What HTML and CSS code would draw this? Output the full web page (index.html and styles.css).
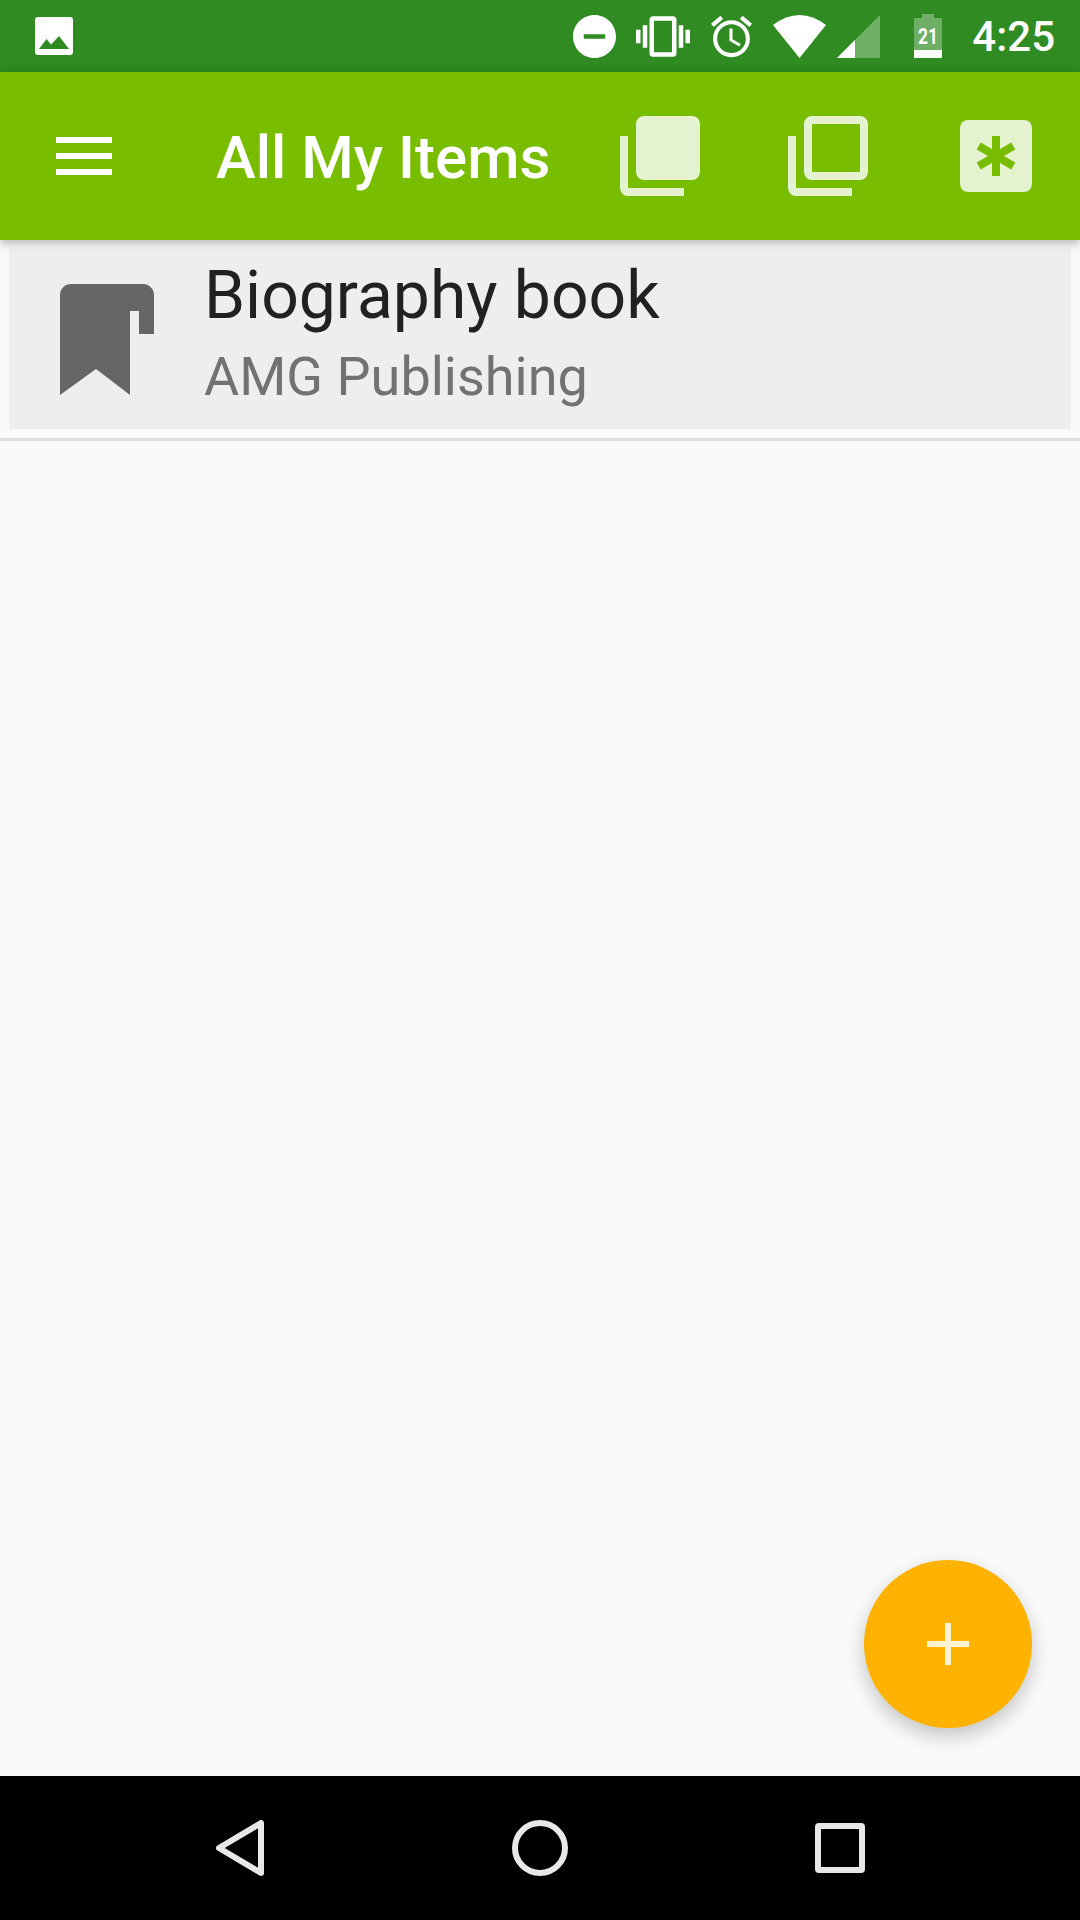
FILE: index.html
```html
<!DOCTYPE html>
<html lang="en">
<head>
  <meta charset="UTF-8" />
  <title>All My Items</title>
  <link rel="stylesheet" href="styles.css">
</head>
<body>
  <div class="status-bar">
    <svg class="notif-icon" width="38" height="38" viewBox="0 0 38 38">
      <path fill-rule="evenodd" fill="#fff" d="M3 0h32a3 3 0 0 1 3 3v32a3 3 0 0 1-3 3H3a3 3 0 0 1-3-3V3a3 3 0 0 1 3-3zM4 32h30L24 19l-8 8.500-4.500-5.500z"/>
    </svg>
    <div class="status-icons">
      <svg class="dnd" width="43" height="43" viewBox="2 2 20 20"><path fill="#fff" d="M12 2C6.480 2 2 6.480 2 12s4.480 10 10 10 10-4.480 10-10S17.520 2 12 2zm5 11H7v-2h10v2z"/></svg>
      <svg width="54" height="41" viewBox="0 3 24 18"><path fill="#fff" d="M0 15h2V9H0v6zm3 2h2V7H3v10zm19-8v6h2V9h-2zm-3 8h2V7h-2v10zM16.500 3h-9C6.670 3 6 3.670 6 4.500v15c0 .830.670 1.500 1.500 1.500h9c.830 0 1.500-.670 1.500-1.500v-15c0-.830-.670-1.500-1.500-1.500zM16 19H8V5h8v14z"/></svg>
      <svg width="41" height="43" viewBox="2 1.860 20 20.140"><path fill="#fff" d="M22 5.720l-4.600-3.860-1.290 1.530 4.600 3.860L22 5.720zM7.880 3.390L6.600 1.860 2 5.710l1.290 1.530 4.590-3.850zM12.500 8H11v6l4.750 2.850.750-1.230-4-2.370V8zM12 4c-4.970 0-9 4.030-9 9s4.030 9 9 9 9-4.030 9-9-4.030-9-9-9zm0 16c-3.870 0-7-3.130-7-7s3.130-7 7-7 7 3.130 7 7-3.130 7-7 7z"/></svg>
      <svg width="53" height="43" viewBox="0 0 53 43"><path fill="#fff" d="M0 10Q26.500-10 53 10L26.500 43z"/></svg>
      <svg class="signal" width="43" height="43" viewBox="0 0 43 43">
        <path fill="#fff" opacity=".3" d="M0 43L43 0v43z"/>
        <path fill="#fff" d="M0 43l18-18v18z"/>
      </svg>
      <svg class="battery" width="28" height="44" viewBox="0 0 28 44">
        <path fill="#fff" opacity=".3" d="M8 0h12v4h8v32H0V4h8z"/>
        <path fill="#fff" d="M0 36h28v8H0z"/>
        <text class="battery-level" x="14" y="30" text-anchor="middle" textLength="20" lengthAdjust="spacingAndGlyphs">21</text>
      </svg>
      <span class="clock">4:25</span>
    </div>
  </div>

  <header class="app-bar">
    <div class="menu-btn"><span></span><span></span><span></span></div>
    <h1 class="title">All My Items</h1>
    <svg class="action first" width="80" height="80" viewBox="0 0 80 80">
      <path fill="#e4f2d0" d="M0 20h8v52h56v8H8a8 8 0 0 1-8-8z"/>
      <rect x="16" width="64" height="64" rx="8" fill="#e4f2d0"/>
    </svg>
    <svg class="action second" width="80" height="80" viewBox="0 0 80 80">
      <path fill="#e4f2d0" d="M0 20h8v52h56v8H8a8 8 0 0 1-8-8z"/>
      <rect x="20" y="4" width="56" height="56" rx="4" fill="none" stroke="#e4f2d0" stroke-width="8"/>
    </svg>
    <svg class="action third" width="72" height="72" viewBox="0 0 72 72">
      <rect width="72" height="72" rx="8" fill="#e4f2d0"/>
      <path stroke="#79bd00" stroke-width="8" d="M36 16v40M18.700 26l34.600 20M18.700 46l34.600-20"/>
    </svg>
  </header>

  <main class="list">
    <div class="item">
      <svg class="item-icon" width="94" height="111" viewBox="0 0 94 111">
        <path fill="#666" d="M11 0h72a11 11 0 0 1 11 11v39H79V27H70v84L36 85 0 111V11A11 11 0 0 1 11 0z"/>
      </svg>
      <div class="item-text">
        <div class="item-title">Biography book</div>
        <div class="item-sub">AMG Publishing</div>
      </div>
    </div>
    <div class="divider"></div>
    <button class="fab"><span class="fab-plus"></span></button>
  </main>

  <footer class="nav-bar">
    <svg width="48" height="56" viewBox="0 0 48 56"><path fill="none" stroke="#e8e8e8" stroke-width="6" stroke-linejoin="round" d="M45 3v50L3 28z"/></svg>
    <svg width="56" height="56" viewBox="0 0 56 56"><circle cx="28" cy="28" r="25" fill="none" stroke="#e8e8e8" stroke-width="6"/></svg>
    <svg class="nav-recents" width="50" height="50" viewBox="0 0 50 50"><rect x="3" y="3" width="44" height="44" rx="1" fill="none" stroke="#e8e8e8" stroke-width="6"/></svg>
  </footer>
</body>
</html>
```

FILE: styles.css
```css
html, body {
  margin: 0;
  height: 100%;
}

body {
  display: flex;
  flex-direction: column;
  width: 1080px;
  height: 1920px;
  font-family: Roboto, sans-serif;
  background: #fafafa;
  overflow: hidden;
}

/* status bar */
.status-bar {
  display: flex;
  align-items: center;
  height: 72px;
  padding: 0 25px 0 35px;
  background: #308b23;
  color: white;
}

.status-icons {
  display: flex;
  align-items: center;
  gap: 21px;
  margin-left: auto;
}

.dnd { margin-right: -1px; }
.signal { margin-left: -10px; }
.battery { margin-left: 13px; }

.battery-level {
  font-family: Roboto, sans-serif;
  font-size: 22px;
  font-weight: 700;
  fill: white;
}

.clock {
  margin-left: 9px;
  font-size: 42px;
  font-weight: 500;
}

/* app bar */
.app-bar {
  position: relative;
  z-index: 2;
  display: flex;
  align-items: center;
  height: 168px;
  padding-left: 56px;
  background: #79bd00;
  box-shadow: 0 3px 10px rgba(0,0,0,0.3);
}

.menu-btn {
  display: flex;
  flex-direction: column;
  gap: 10px;
  width: 56px;
}

.menu-btn span {
  height: 6px;
  background: white;
}

.title {
  margin: 2px 0 0 104px;
  font-size: 60px;
  font-weight: 500;
  color: white;
  white-space: nowrap;
}

.action { flex: none; }
.action.first { margin-left: auto; }
.action.second { margin-left: 88px; }
.action.third { margin: 0 48px 0 92px; }

/* list */
.list {
  position: relative;
  flex: 1;
}

.item {
  display: flex;
  align-items: center;
  height: 180px;
  margin: 9px 9px 0;
  background: #eeeeee;
}

.item-icon {
  flex: none;
  margin-left: 51px;
  filter: blur(0.6px);
}

.item-text {
  margin: -6px 0 0 50px;
}

.item-title {
  font-size: 66px;
  line-height: 80px;
  color: #212121;
}

.item-sub {
  font-size: 54px;
  line-height: 81px;
  color: #727272;
}

.divider {
  height: 3px;
  margin-top: 9px;
  background: #dedede;
}

.fab {
  position: absolute;
  right: 48px;
  bottom: 48px;
  display: flex;
  align-items: center;
  justify-content: center;
  width: 168px;
  height: 168px;
  padding: 0;
  border: none;
  border-radius: 50%;
  background: #ffb300;
  box-shadow: 0 8px 20px rgba(0,0,0,0.22);
}

.fab-plus {
  position: relative;
  width: 42px;
  height: 6px;
  background: #fff2d0;
}

.fab-plus::after {
  content: "";
  position: absolute;
  left: 18px;
  top: -18px;
  width: 6px;
  height: 42px;
  background: #fff2d0;
}

/* nav bar */
.nav-bar {
  display: flex;
  align-items: center;
  height: 144px;
  padding-left: 216px;
  gap: 248px;
  background: black;
}

.nav-recents { margin-left: -1px; }
```
